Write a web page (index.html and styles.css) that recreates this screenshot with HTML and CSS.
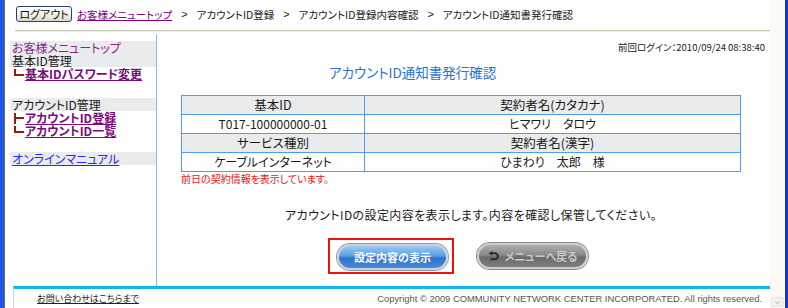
FILE: index.html
```html
<!DOCTYPE html>
<html lang="ja">
<head>
<meta charset="utf-8">
<title>アカウントID通知書発行確認</title>
<link rel="stylesheet" href="styles.css">
</head>
<body>
<div class="win">
  <div class="edge-l"></div>
  <div class="view">
    <header class="top">
      <div class="crumbs">
        <button class="logout" type="button">ログアウト</button>
        <a class="crumb-link" href="#">お客様メニュートップ</a>
        <span class="sep">&gt;</span><span>アカウントID登録</span>
        <span class="sep">&gt;</span><span>アカウントID登録内容確認</span>
        <span class="sep">&gt;</span><span>アカウントID通知書発行確認</span>
      </div>
      <div class="rule"></div>
    </header>
    <div class="middle">
      <nav class="side">
        <a class="s-row s-grey s-link" href="#">お客様メニュートップ</a>
        <div class="s-row s-grey">基本ID管理</div>
        <div class="s-row"><span class="tree tree-end"></span><a class="s-sub" href="#">基本IDパスワード変更</a></div>
        <div class="s-gap"></div>
        <div class="s-row s-grey">アカウントID管理</div>
        <div class="s-row"><span class="tree tree-mid"></span><a class="s-sub" href="#">アカウントID登録</a></div>
        <div class="s-row"><span class="tree tree-end"></span><a class="s-sub" href="#">アカウントID一覧</a></div>
        <div class="s-gap s-gap2"></div>
        <a class="s-row s-grey s-blue" href="#">オンラインマニュアル</a>
      </nav>
      <main class="main">
        <div class="last-login">前回ログイン：2010/09/24 08:38:40</div>
        <h1 class="title">アカウントID通知書発行確認</h1>
        <table class="info">
          <tr class="th"><td class="c1">基本ID</td><td>契約者名(カタカナ)</td></tr>
          <tr><td class="c1">T017-100000000-01</td><td>ヒマワリ　タロウ</td></tr>
          <tr class="th"><td class="c1">サービス種別</td><td>契約者名(漢字)</td></tr>
          <tr><td class="c1">ケーブルインターネット</td><td>ひまわり　太郎　様</td></tr>
        </table>
        <p class="note">前日の契約情報を表示しています。</p>
        <p class="msg">アカウントIDの設定内容を表示します。内容を確認し保管してください。</p>
        <div class="btns">
          <div class="focus-box"><button class="pill pill-blue" type="button">設定内容の表示</button></div>
          <button class="pill pill-grey" type="button"><svg class="ret" viewBox="0 0 12 12" width="11" height="11"><path d="M4 2.5 H7.5 A3.2 3.2 0 0 1 7.5 8.9 H2.5" fill="none" stroke="#2a2a2a" stroke-width="2.2"/><path d="M0.5 2.5 L4.6 0 L4.6 5 Z" fill="#2a2a2a"/></svg>メニューへ戻る</button>
        </div>
      </main>
    </div>
    <footer class="foot">
      <a class="contact" href="#">お問い合わせはこちらまで</a>
      <span class="copy">Copyright © 2009 COMMUNITY NETWORK CENTER INCORPORATED. All rights reserved.</span>
    </footer>
  </div>
  <div class="scroll"><div class="arrow"><svg viewBox="0 0 9 6" width="7" height="5"><path d="M1 1 L4.5 4.5 L8 1" fill="none" stroke="#c8c8c0" stroke-width="1.4"/></svg></div></div>
  <div class="edge-r"></div>
</div>
</body>
</html>
```
FILE: styles.css
```css
* { box-sizing: border-box; }
html, body { margin: 0; padding: 0; }
body {
  width: 788px;
  height: 308px;
  overflow: hidden;
  background: #fff;
  font-family: "Noto Sans CJK JP", "Liberation Sans", sans-serif;
  font-feature-settings: "palt";
  font-size: 12px;
  color: #1a1a1a;
}
.win { display: flex; height: 308px; }
.edge-l { width: 5px; background: #1d55e4; border-right: 1px solid #6b6b6b; }
.edge-r { width: 3px; background: #0b37d2; }
.scroll {
  width: 15px;
  background: #fbfaf4;
  display: flex;
  flex-direction: column;
  justify-content: flex-end;
}
.arrow {
  height: 10px;
  margin: 0 1px 1px;
  border: 1px solid #e6e4dc;
  border-radius: 2px;
  background: #f4f3ee;
  display: flex;
  align-items: center;
  justify-content: center;
}
.view { flex: 1; display: flex; flex-direction: column; min-width: 0; }

/* header */
.top { padding: 6px 0 0 11px; height: 34px; }
.crumbs { display: flex; align-items: center; height: 16px; white-space: nowrap; font-size: 10.5px; }
.logout {
  width: 56px; height: 16px; padding: 0;
  margin-right: 5px;
  font: inherit; font-size: 11px; line-height: 12px;
  color: #111;
  border: 1px solid #23446d;
  border-radius: 3px;
  background: linear-gradient(#ffffff, #f1efe6 60%, #dcd8c8);
}
.crumb-link { color: #800080; text-decoration: underline; }
.sep { margin: 0 9px 0 9px; font-family: "Liberation Sans", sans-serif; font-size: 11px; }
.rule { margin-top: 8px; margin-left: -1px; border-top: 1px solid #cac4b0; border-bottom: 1px solid #f1eee6; }

/* middle */
.middle { flex: 1; display: flex; min-height: 0; }
.side {
  width: 147px;
  margin-left: 5px;
  padding-top: 7px;
  border-right: 1px solid #8cbaf0;
  display: flex;
  flex-direction: column;
}
.s-row { display: flex; align-items: center; height: 13px; line-height: 13px; padding-left: 2px; white-space: nowrap; font-size: 12px; color: #1a1a1a; }
.s-grey { background: #e9ebed; }
.s-link { color: #8a1f8a; text-decoration: underline; }
.s-blue { color: #2a2af0; text-decoration: underline; }
.s-sub { color: #7a0d7a; font-weight: bold; text-decoration: underline; }
.s-gap { height: 18px; }
.s-gap2 { height: 15px; }
.tree { position: relative; width: 11px; height: 13px; margin-left: 2px; }
.tree::before { content: ""; position: absolute; left: 0; top: 2px; width: 2px; height: 7px; background: #9b1c06; }
.tree::after { content: ""; position: absolute; left: 0; top: 7px; width: 10px; height: 2px; background: #9b1c06; }
.tree-mid::before { height: 11px; }
.tree-mid::after { top: 6px; }

.main { flex: 1; padding: 0 5px 0 24px; }
.last-login {
  text-align: right;
  font-size: 9.5px;
  line-height: 10px;
  margin-top: 8px;
  color: #222;
}
.title {
  margin: 11px 0 0 148px;
  font-size: 13.5px;
  font-weight: normal;
  color: #2b72d3;
  line-height: 18px;
}
.info {
  margin-top: 14px;
  width: 560px;
  border-collapse: collapse;
  border-top: 1px solid #5fa6f0;
  border-left: 1px solid #5fa6f0;
  border-right: 1px solid #a8cff7;
  border-bottom: 1px solid #a8cff7;
  font-size: 12px;
}
.info td {
  border: 1px solid #4e9cef;
  height: 19px;
  padding: 0;
  text-align: center;
  line-height: 16px;
}
.info .th td { background: #e9ebec; font-size: 12.5px; }
.info .c1 { width: 183px; }
.note { margin: 1px 0 0; font-size: 10px; line-height: 12px; color: #ee1111; }
.msg { margin: 22px 0 0; text-align: center; font-size: 12px; line-height: 16px; padding-right: 4px; letter-spacing: 0.4px; }
.btns { display: flex; justify-content: center; align-items: center; gap: 23px; margin-top: 15px; padding-right: 30px; }
.focus-box { border: 2px solid #ee1111; padding: 4px 6px 2px 7px; width: 126px; height: 36px; }
.pill {
  width: 111px; height: 26px;
  border-radius: 13px;
  font: inherit;
  font-size: 11px;
  font-weight: bold;
  display: flex; align-items: center; justify-content: center; gap: 4px;
  padding: 0;
}
.pill-blue {
  color: #fff;
  border: 2px solid #c9d3dc;
  background: linear-gradient(#9ccaf4, #5c9ee4 45%, #2e72cc 55%, #4a8ad8);
  box-shadow: 0 0 0 1px #8d9aa8;
}
.pill-grey {
  color: #c9c9c9;
  border: 2px solid #c9cdd0;
  background: linear-gradient(#aeaeae, #8a8a8a 45%, #6a6a6a 55%, #7e7e7e);
  box-shadow: 0 0 0 1px #8a8e92;
}
.ret { margin-right: 2px; }

/* footer */
.foot {
  height: 22px;
  margin-left: 8px;
  border-top: 3px solid #13b3ef;
  border-left: 1px solid #d6d6d0;
  display: flex;
  align-items: center;
  justify-content: space-between;
  padding: 0 8px 0 23px;
  font-size: 9px;
}
.contact { color: #222; text-decoration: underline; }
.copy { font-family: "Liberation Sans", sans-serif; color: #555; font-size: 9.4px; }
```
